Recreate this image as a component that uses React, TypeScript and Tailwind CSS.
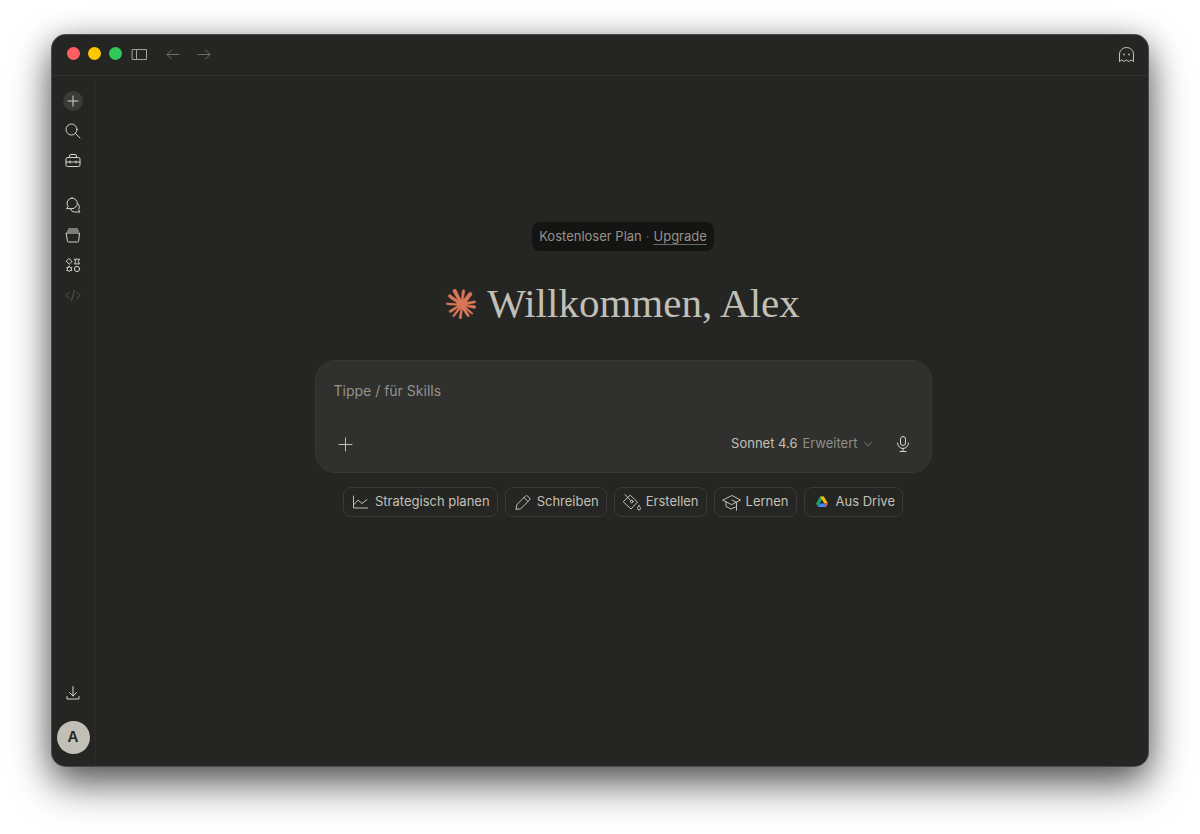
import type { ReactNode } from "react";

type IconProps = { children: ReactNode; className?: string };

function Icon({ children, className = "size-5" }: IconProps) {
  return (
    <svg
      viewBox="0 0 20 20"
      fill="none"
      stroke="currentColor"
      strokeWidth="1"
      strokeLinecap="round"
      strokeLinejoin="round"
      aria-hidden="true"
      className={`shrink-0 ${className}`}
    >
      {children}
    </svg>
  );
}

function NavButton({ label, children, className = "text-[#d6d5cd]" }: { label: string; children: ReactNode; className?: string }) {
  return (
    <button type="button" aria-label={label} className={`flex size-[30px] items-center justify-center ${className}`}>
      {children}
    </button>
  );
}

function Chip({ icon, children }: { icon: ReactNode; children: ReactNode }) {
  return (
    <button
      type="button"
      className="flex h-[30px] items-center gap-1 rounded-lg border border-[#393937] px-[7px] text-[13px] whitespace-nowrap text-[#c2c0b6]"
    >
      {icon}
      {children}
    </button>
  );
}

function Starburst() {
  return (
    <svg viewBox="0 0 24 24" aria-hidden="true" strokeWidth="0.4" className="size-[30px] shrink-0 fill-[#d97757] stroke-[#d97757]">
      <path d="m4.7144 15.9555 4.7174-2.6471.079-.2307-.079-.1275h-.2307l-.7893-.0486-2.6956-.0729-2.3375-.0971-2.2646-.1214-.5707-.1215-.5343-.7042.0546-.3522.4797-.3218.686.0608 1.5179.1032 2.2767.1578 1.6514.0972 2.4468.255h.3886l.0546-.1579-.1336-.0971-.1032-.0972L6.973 9.8356l-2.55-1.6879-1.3356-.9714-.7225-.4918-.3643-.4614-.1578-1.0078.6557-.7225.8803.0607.2246.0607.8925.686 1.9064 1.4754 2.4893 1.8336.3643.3035.1457-.1032.0182-.0728-.164-.2733-1.3539-2.4467-1.445-2.4893-.6435-1.032-.17-.6194c-.0607-.255-.1032-.4674-.1032-.7285L6.287.1335 6.6997 0l.9957.1336.419.3642.6192 1.4147 1.0018 2.2282 1.5543 3.0296.4553.8985.2429.8318.091.255h.1579v-.1457l.1275-1.706.2368-2.0947.2307-2.6957.0789-.7589.3764-.9107.7468-.4918.5828.2793.4797.686-.0668.4433-.2853 1.8517-.5586 2.9021-.3643 1.9429h.2125l.2429-.2429.9835-1.3053 1.6514-2.0643.7286-.8196.85-.9046.5464-.4311h1.0321l.759 1.1293-.34 1.1657-1.0625 1.3478-.8804 1.1414-1.2628 1.7-.7893 1.36.0729.1093.1882-.0183 2.8535-.607 1.5421-.2794 1.8396-.3157.8318.3886.091.3946-.3278.8075-1.967.4857-2.3072.4614-3.4364.8136-.0425.0304.0486.0607 1.5482.1457.6618.0364h1.621l3.0175.2247.7892.522.4736.6376-.079.4857-1.2142.6193-1.6393-.3886-3.825-.9107-1.3113-.3279h-.1822v.1093l1.0929 1.0686 2.0035 1.8092 2.5075 2.3314.1275.5768-.3218.4554-.34-.0486-2.2039-1.6575-.85-.7468-1.9246-1.621h-.1275v.17l.4432.6496 2.3436 3.5214.1214 1.0807-.17.3521-.6071.2125-.6679-.1214-1.3721-1.9246L14.38 17.959l-1.1414-1.9428-.1397.079-.674 7.2552-.3156.3703-.7286.2793-.6071-.4614-.3218-.7468.3218-1.4753.3886-1.9246.3157-1.53.2853-1.9004.17-.6314-.0121-.0425-.1397.0182-1.4328 1.9672-2.1796 2.9446-1.7243 1.8456-.4128.164-.7164-.3704.0667-.6618.4008-.5889 2.386-3.0357 1.4389-1.882.929-1.0868-.0062-.1579h-.0546l-6.3385 4.1164-1.1293.1457-.4857-.4554.0608-.7467.2307-.2429 1.9064-1.3114Z" />
      <circle cx="11.7" cy="12" r="3.2" />
    </svg>
  );
}

function DriveLogo() {
  return (
    <svg viewBox="0 0 20 20" aria-hidden="true" className="size-5 shrink-0">
      <path d="M8.2 4.5h3.6L10 7.6 6 14.8 4 11.5Z" fill="#1ea362" />
      <path d="M8.2 4.5h3.6l4.200 7h-3.7Z" fill="#fbbc04" />
      <path d="M6 15 7.900 11.500H16L14 15Z" fill="#4285f4" />
      <path d="M12.3 11.500H16L14 15Z" fill="#ea4335" />
    </svg>
  );
}

function TitleBar() {
  return (
    <header className="flex h-[41px] items-center border-b border-[#31312f] pr-3 pl-[15px]">
      <div className="flex gap-2 pb-1">
        <button type="button" aria-label="Schließen" className="size-[13px] rounded-full bg-[#ff5f62]" />
        <button type="button" aria-label="Minimieren" className="size-[13px] rounded-full bg-[#fec700]" />
        <button type="button" aria-label="Maximieren" className="size-[13px] rounded-full bg-[#31c859]" />
      </div>
      <button type="button" aria-label="Seitenleiste" className="ml-2 text-[#a3a29b]">
        <Icon>
          <rect x="2.5" y="4.5" width="14" height="10" />
          <path d="M6.5 4.5v10" />
        </Icon>
      </button>
      <button type="button" aria-label="Zurück" className="ml-3 text-[#6f6e69]">
        <Icon>
          <path d="M17 9.500H5M9.500 5 5 9.500 9.500 14" />
        </Icon>
      </button>
      <button type="button" aria-label="Vorwärts" className="ml-3 text-[#6f6e69]">
        <Icon>
          <path d="M4 9.500h12M11.500 5 16 9.500 11.500 14" />
        </Icon>
      </button>
      <button type="button" aria-label="Inkognito-Chat" className="ml-auto text-[#c3c2ba]">
        <Icon>
          <path d="M3.500 16.500V9a7 6.500 0 0 1 14 0v7.500l-2.300-1.500-2.300 1.500-2.400-1.500-2.400 1.500-2.300-1.500Z" />
          <path d="M8 9.300v.5M13 9.300v.5" strokeWidth="1.500" />
        </Icon>
      </button>
    </header>
  );
}

function Sidebar() {
  return (
    <nav aria-label="Hauptnavigation" className="flex w-11 shrink-0 flex-col items-center border-r border-[#2b2b29] pt-[10px] pr-px pb-3">
      <NavButton label="Neuer Chat">
        <span className="flex size-5 items-center justify-center rounded-full bg-[#3a3a38]">
          <Icon>
            <path d="M10 5v10M5 10h10" />
          </Icon>
        </span>
      </NavButton>
      <NavButton label="Suchen">
        <Icon>
          <circle cx="8.500" cy="8.500" r="5.500" />
          <path d="m12.600 12.600 4.400 4.400" />
        </Icon>
      </NavButton>
      <NavButton label="Anpassen">
        <Icon>
          <rect x="3" y="6.500" width="14" height="9" rx="1.500" />
          <path d="M6.500 6.500V5A1.500 1.500 0 0 1 8 3.500h4A1.500 1.500 0 0 1 13.500 5v1.500M3 11h14M7 10v2M13 10v2" />
        </Icon>
      </NavButton>
      <div className="mt-[14px] flex flex-col">
        <NavButton label="Chats">
          <Icon>
            <path d="M9 3a5.300 5.300 0 1 1 0 10.600H3.500l1.700-2A5.300 5.300 0 0 1 9 3Z" />
            <path d="M14.700 8.400a4.700 4.700 0 0 1 .8 6.400L17 17h-5.500a4.500 4.500 0 0 1-4-2.600" />
          </Icon>
        </NavButton>
        <NavButton label="Projekte">
          <Icon>
            <path d="M3.500 8h13l-.8 7.700a1.300 1.300 0 0 1-1.300 1.300H5.600a1.300 1.300 0 0 1-1.300-1.300ZM4.500 6h11M5.500 4h9" />
          </Icon>
        </NavButton>
        <NavButton label="Artefakte">
          <Icon>
            <path d="M6.300 3.700 9 6.500 6.300 9.200 3.500 6.500ZM11.500 4.200h5l-1.200 2.300 1.200 2.400h-5l1.200-2.400Z" />
            <circle cx="14" cy="14" r="2.600" />
            <path d="m6.300 11.200.9 1.300h1.600l-.7 1.500.7 1.500H7.200l-.9 1.300-.9-1.300H3.800l.7-1.500-.7-1.500h1.600Z" />
          </Icon>
        </NavButton>
        <NavButton label="Code" className="text-[#5b5a56]">
          <Icon>
            <path d="m6 7.500-3 3 3 3M14 7.500l3 3-3 3M11.500 5.500l-3 10" />
          </Icon>
        </NavButton>
      </div>
      <div className="mt-auto flex flex-col items-center gap-[13px]">
        <NavButton label="App herunterladen">
          <Icon>
            <path d="M10 3.500V13M6.500 9.500 10 13l3.500-3.500M4 13.500V16h12v-2.500" />
          </Icon>
        </NavButton>
        <button type="button" aria-label="Konto von Alex" className="flex size-[33px] items-center justify-center rounded-full bg-[#c2c0b6] text-[15px] font-semibold text-[#262624]">
          A
        </button>
      </div>
    </nav>
  );
}

function Composer() {
  return (
    <form className="mt-8 w-full max-w-[617px] rounded-[20px] border border-[#363634] bg-[#30302e] px-[18px] pt-[17px] pb-3">
      <input
        type="text"
        aria-label="Nachricht"
        placeholder="Tippe / für Skills"
        className="block h-6 w-full bg-transparent text-[14px] text-[#c2c0b6] outline-none placeholder:text-[#94938b]"
      />
      <div className="mt-[26px] flex h-8 items-center">
        <button type="button" aria-label="Anhang hinzufügen" className="text-[#c2c0b6]">
          <Icon>
            <path d="M11.500 4v13M5 10.500h13" />
          </Icon>
        </button>
        <button type="button" className="ml-auto flex items-center gap-[5px] text-[13px] text-[#c2c0b6]">
          Sonnet 4.6
          <span className="text-[#8f8e86]">Erweitert</span>
          <svg viewBox="0 0 10 10" fill="none" stroke="#777670" strokeLinecap="round" strokeLinejoin="round" aria-hidden="true" className="size-[10px]">
            <path d="M1.500 3 5 7l3.500-4" />
          </svg>
        </button>
        <button type="button" aria-label="Spracheingabe" className="ml-5 text-[#d6d5cd]">
          <Icon>
            <rect x="7.500" y="2.500" width="5" height="9" rx="2.500" />
            <path d="M4.500 9a5.500 5.500 0 0 0 11 0M10 14.500V17M7 17.500h6" />
          </Icon>
        </button>
      </div>
    </form>
  );
}

function Suggestions() {
  return (
    <div className="mt-[14px] flex flex-wrap justify-center gap-[7px]">
      <Chip
        icon={
          <Icon>
            <path d="M2.500 4v12h14M3 12.500 7 8l4 3.500L16 7.500" />
          </Icon>
        }
      >
        Strategisch planen
      </Chip>
      <Chip
        icon={
          <Icon>
            <path d="m3 17 1-4.500L12.500 4a1.400 1.400 0 0 1 2 0L16.500 6a1.400 1.400 0 0 1 0 2L8 16.500ZM11 5.500l4 4" />
          </Icon>
        }
      >
        Schreiben
      </Chip>
      <Chip
        icon={
          <Icon>
            <path d="M8.500 3.500 15.500 10 9 17 1.500 10Z" />
            <path d="m3 2.500 5.800 6.200" />
            <circle cx="9.700" cy="9.500" r="1.300" />
            <path d="M17 13.500c1 1.500 1.500 2.200 1.500 2.900a1.500 1.500 0 0 1-3 0c0-.7.500-1.400 1.500-2.900Z" />
          </Icon>
        }
      >
        Erstellen
      </Chip>
      <Chip
        icon={
          <Icon>
            <path d="M1 8 10 3.500 18.500 8 10 12.500ZM4 10v4.500L9 17l4.500-2M10 8l4.500 2.300V18M14.500 15v3" />
          </Icon>
        }
      >
        Lernen
      </Chip>
      <Chip icon={<DriveLogo />}>Aus Drive</Chip>
    </div>
  );
}

export default function App() {
  return (
    <div className="flex min-h-screen bg-white px-[52px] pt-[35px] pb-[68px] font-['Inter','Liberation_Sans',sans-serif]">
      <div className="flex flex-1 flex-col overflow-hidden rounded-[14px] bg-[#252523] shadow-[0_0_0_1px_#4a4a48,0_18px_40px_rgba(0,0,0,0.6),0_4px_30px_rgba(0,0,0,0.25)]">
        <TitleBar />
        <div className="flex flex-1">
          <Sidebar />
          <main className="flex flex-1 flex-col items-center pt-[146px] pr-4 pl-[18px]">
            <p className="flex h-[29px] items-center gap-1 rounded-lg bg-[#141413] px-[7px] text-[13px] text-[#94938b]">
              Kostenloser Plan
              <span className="text-[#5b5a56]">·</span>
              <a href="#upgrade" className="underline decoration-[#6b6a65] underline-offset-[3px]">
                Upgrade
              </a>
            </p>
            <h1 className="mt-[29px] flex h-12 items-center gap-[11px] font-['Liberation_Serif',serif] text-[41px] whitespace-nowrap text-[#c2c0b6]">
              <Starburst />
              Willkommen, Alex
            </h1>
            <Composer />
            <Suggestions />
          </main>
        </div>
      </div>
    </div>
  );
}
